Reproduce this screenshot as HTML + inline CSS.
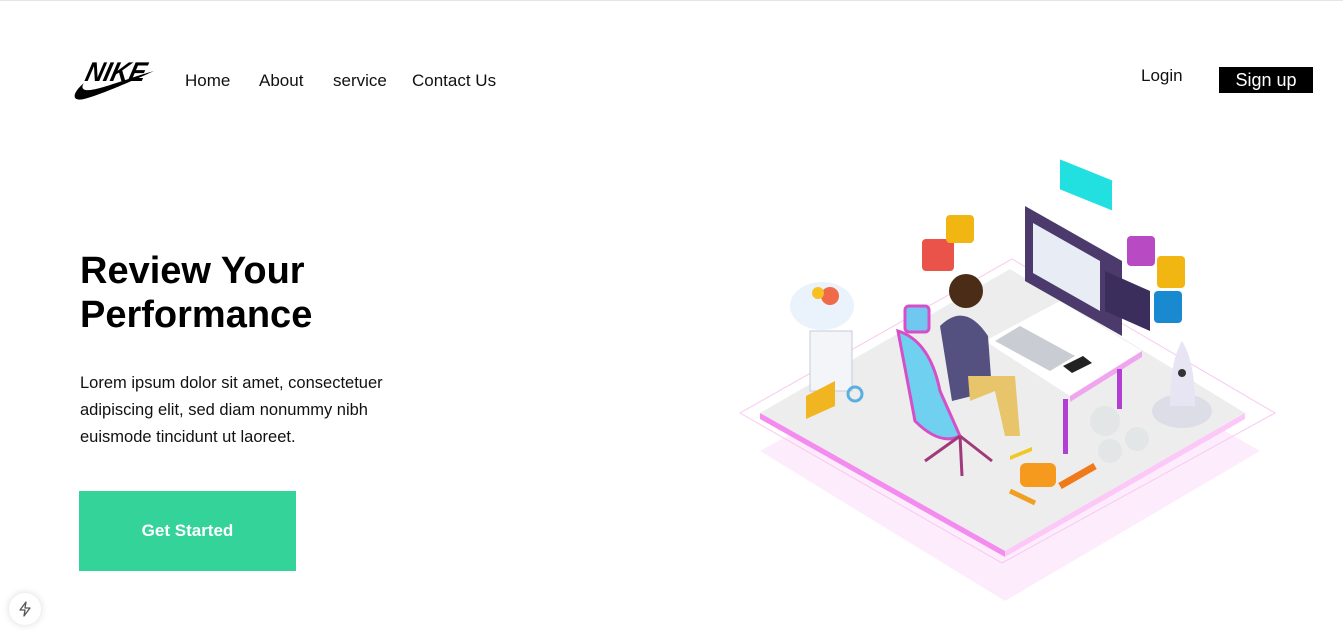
<!DOCTYPE html>
<html><head><meta charset="utf-8"><style>
*{margin:0;padding:0;box-sizing:border-box}
body{width:1343px;height:631px;overflow:hidden;background:#fff;font-family:"Liberation Sans",sans-serif;color:#111;position:relative;border-top:1px solid #e5e5e5}
.nav a{position:absolute;top:70px;font-size:17px;color:#111;text-decoration:none}
h1{position:absolute;left:80px;top:248px;font-size:38px;line-height:44px;font-weight:bold;color:#000}
p{position:absolute;left:80px;top:369px;font-size:16.5px;line-height:27px;width:340px;color:#111}
.btn{position:absolute;left:79px;top:490px;width:217px;height:80px;background:#34d399;color:#fff;font-weight:bold;font-size:17px;display:flex;align-items:center;justify-content:center}
.login{position:absolute;left:1141px;top:65px;font-size:17px}
.signup{position:absolute;left:1219px;top:66px;width:94px;height:26px;background:#000;color:#fff;font-size:18px;text-align:center;line-height:27px}
.bolt{position:absolute;left:9px;top:592px;width:32px;height:32px;border-radius:50%;background:#fff;box-shadow:0 0 8px rgba(0,0,0,.15);display:flex;align-items:center;justify-content:center}
</style></head><body>
<svg style="position:absolute;left:72px;top:56px" width="84" height="46" viewBox="0 0 84 46">
<text x="18" y="24" font-family="Liberation Sans" font-weight="bold" font-style="italic" font-size="27" transform="skewX(-14)" fill="#000" textLength="60" lengthAdjust="spacingAndGlyphs">NIKE</text>
<path d="M12 26 C0 36 -1 45 12 42 C28 38 60 24 82 14 C60 20 30 32 18 33 C10 34 9 30 12 26Z" fill="#000"/>
</svg>
<div class="nav"><a style="left:185px">Home</a><a style="left:259px">About</a><a style="left:333px">service</a><a style="left:412px">Contact Us</a></div>
<div class="login">Login</div><div class="signup">Sign up</div>
<h1>Review Your<br>Performance</h1>
<p>Lorem ipsum dolor sit amet, consectetuer adipiscing elit, sed diam nonummy nibh euismode tincidunt ut laoreet.</p>
<div class="btn">Get Started</div>
<div class="bolt"><svg width="16" height="16" viewBox="0 0 16 16"><path d="M9 1 L3 9 H8 L7 15 L13 7 H8 Z" fill="none" stroke="#555" stroke-width="1.3" stroke-linejoin="round"/></svg></div>

<svg style="position:absolute;left:730px;top:150px" width="560" height="450" viewBox="0 0 560 450">
<polygon points="30,300 275,450 530,300 285,160" fill="#fde8fb" opacity=".8"/>
<polygon points="10,262 272,412 545,262 282,108" fill="none" stroke="#f8c8f0" stroke-width="1"/>
<polygon points="30,262 275,400 515,262 280,118" fill="#ededed"/>
<polygon points="30,262 275,400 275,406 30,268" fill="#f48cf0"/>
<polygon points="275,400 515,262 515,268 275,406" fill="#fbc8f7"/>
<polygon points="255,190 330,150 412,200 340,245" fill="#fff"/>
<polygon points="340,245 412,200 412,206 340,251" fill="#f0a6ef"/>
<rect x="333" y="248" width="5" height="55" fill="#b23fd3"/><rect x="387" y="218" width="5" height="40" fill="#b23fd3"/>
<polygon points="295,55 392,110 392,185 295,130" fill="#4b3a6b"/>
<polygon points="303,72 370,110 370,160 303,122" fill="#e7ecf5"/>
<polygon points="375,120 420,140 420,180 375,160" fill="#3b2e5c"/>
<rect x="330" y="5" width="52" height="30" fill="#22e0e0" transform="skewY(22) translate(0,-130)"/>
<polygon points="265,190 290,175 345,205 320,220" fill="#c9ccd3"/>
<polygon points="333,215 353,205 362,212 342,222" fill="#222"/>
<ellipse cx="236" cy="140" rx="17" ry="17" fill="#4a2c17"/>
<path d="M210 175 Q235 150 258 185 L262 240 L222 250 Z" fill="#545180"/>
<path d="M238 225 L285 225 L290 285 L275 285 L265 240 L240 250Z" fill="#e8c46a"/>
<path d="M168 180 Q200 190 210 240 L230 285 Q210 295 185 270 Z" fill="#6fd0f0" stroke="#d64fc8" stroke-width="3"/>
<rect x="175" y="155" width="24" height="26" rx="4" fill="#70c8f0" stroke="#d64fc8" stroke-width="3"/>
<path d="M230 285 L195 310 M230 285 L262 310 M230 285 L232 325" stroke="#a03a7a" stroke-width="3"/>
<rect x="192" y="88" width="32" height="32" rx="4" fill="#e9534a"/>
<rect x="216" y="64" width="28" height="28" rx="4" fill="#f2b613"/>
<ellipse cx="92" cy="155" rx="32" ry="24" fill="#eaf2fb"/>
<circle cx="100" cy="145" r="9" fill="#f06a4a"/><circle cx="88" cy="142" r="6" fill="#f7c023"/>
<rect x="80" y="180" width="42" height="60" fill="#f3f5f9" stroke="#c5cbd8"/>
<polygon points="76,245 105,230 105,255 76,268" fill="#f0b520"/>
<circle cx="125" cy="243" r="7" fill="none" stroke="#5aaee0" stroke-width="3"/>
<rect x="397" y="85" width="28" height="30" rx="4" fill="#b84bc4"/>
<rect x="427" y="105" width="28" height="32" rx="4" fill="#f2b613"/>
<rect x="424" y="140" width="28" height="32" rx="4" fill="#1a8ad0"/>
<ellipse cx="452" cy="260" rx="30" ry="17" fill="#dddde8"/>
<path d="M452 190 Q465 210 465 255 L440 255 Q440 210 452 190Z" fill="#e7e5f3"/>
<circle cx="452" cy="222" r="4" fill="#333"/>
<circle cx="375" cy="270" r="15" fill="#e3e6e6"/><circle cx="407" cy="288" r="12" fill="#e3e6e6"/><circle cx="380" cy="300" r="12" fill="#e3e6e6"/>
<rect x="290" y="312" width="36" height="24" rx="6" fill="#f59a1c"/>
<path d="M330 335 L365 315" stroke="#f07a1a" stroke-width="7"/>
<path d="M280 340 L305 352" stroke="#f0a020" stroke-width="5"/>
<polygon points="280,305 302,296 302,300 280,309" fill="#f2c623"/>
</svg>
</body></html>
